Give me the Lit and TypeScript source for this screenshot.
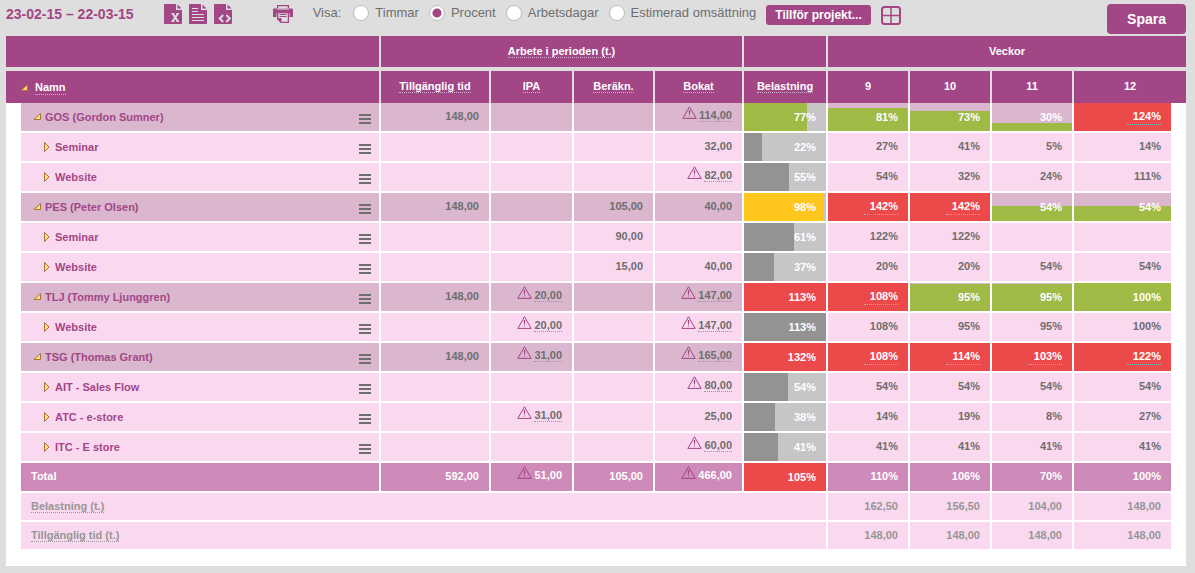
import { LitElement, html, css, svg, nothing } from "lit";
import { customElement, property, state } from "lit/decorators.js";
import { classMap } from "lit/directives/class-map.js";
import { styleMap } from "lit/directives/style-map.js";

type Tone = "ok" | "near" | "over" | "plain";

interface Hours {
  value: string;
  warn?: boolean;
}

interface Row {
  name: string;
  level: 0 | 1;
  available?: string;
  ipa?: Hours;
  estimated?: string;
  booked?: Hours;
  load: number;
  tone: Tone;
  weeks: (number | null)[];
}

const w = (value: string): Hours => ({ value, warn: true });
const h = (value: string): Hours => ({ value });

const ROWS: Row[] = [
  { name: "GOS (Gordon Sumner)", level: 0, available: "148,00", booked: w("114,00"), load: 77, tone: "ok", weeks: [81, 73, 30, 124] },
  { name: "Seminar", level: 1, booked: h("32,00"), load: 22, tone: "plain", weeks: [27, 41, 5, 14] },
  { name: "Website", level: 1, booked: w("82,00"), load: 55, tone: "plain", weeks: [54, 32, 24, 111] },
  { name: "PES (Peter Olsen)", level: 0, available: "148,00", estimated: "105,00", booked: h("40,00"), load: 98, tone: "near", weeks: [142, 142, 54, 54] },
  { name: "Seminar", level: 1, estimated: "90,00", load: 61, tone: "plain", weeks: [122, 122, null, null] },
  { name: "Website", level: 1, estimated: "15,00", booked: h("40,00"), load: 37, tone: "plain", weeks: [20, 20, 54, 54] },
  { name: "TLJ (Tommy Ljunggren)", level: 0, available: "148,00", ipa: w("20,00"), booked: w("147,00"), load: 113, tone: "over", weeks: [108, 95, 95, 100] },
  { name: "Website", level: 1, ipa: w("20,00"), booked: w("147,00"), load: 113, tone: "plain", weeks: [108, 95, 95, 100] },
  { name: "TSG (Thomas Grant)", level: 0, available: "148,00", ipa: w("31,00"), booked: w("165,00"), load: 132, tone: "over", weeks: [108, 114, 103, 122] },
  { name: "AIT - Sales Flow", level: 1, booked: w("80,00"), load: 54, tone: "plain", weeks: [54, 54, 54, 54] },
  { name: "ATC - e-store", level: 1, ipa: w("31,00"), booked: h("25,00"), load: 38, tone: "plain", weeks: [14, 19, 8, 27] },
  { name: "ITC - E store", level: 1, booked: w("60,00"), load: 41, tone: "plain", weeks: [41, 41, 41, 41] },
];

const WEEKS = ["9", "10", "11", "12"];

const page = svg`<path fill="currentColor" d="M1 0h11v6h6v13a1 1 0 0 1-1 1H1a1 1 0 0 1-1-1V1a1 1 0 0 1 1-1z"/><path fill="currentColor" d="M13.5 0.5l4 4h-4z"/>`;

const warningIcon = html`<svg class="warning" width="15" height="13" viewBox="0 0 15 13" role="img" aria-label="Varning">
  <path d="M7.5 0.8L14.2 12.4H0.8z" fill="none" stroke="currentColor" />
  <path d="M6.7 4h1.6l-.4 4.5h-.8zM7 9.4h1v1.2h-1z" fill="currentColor" />
</svg>`;

@customElement("plan-toolbar")
export class PlanToolbar extends LitElement {
  @state() private mode = "Procent";

  static styles = css`
    :host {
      display: flex;
      align-items: flex-start;
      padding: 4px 0 2px;
      color: #6e6e6e;
      font-size: 13px;
    }
    .period {
      margin: 0;
      color: #a24686;
      font-size: 14px;
      line-height: 20px;
      font-weight: bold;
      white-space: nowrap;
    }
    .exports {
      display: flex;
      gap: 7px;
      margin-left: 30px;
    }
    button {
      font-family: inherit;
      cursor: pointer;
    }
    .icon {
      display: block;
      padding: 0;
      border: 0;
      background: none;
      color: #a24686;
    }
    .icon svg {
      display: block;
    }
    .print {
      margin-left: 41px;
    }
    .modes {
      display: flex;
      gap: 10px;
      margin: 0 10px 0 20px;
      padding: 0;
      border: 0;
      line-height: 18px;
      white-space: nowrap;
    }
    .caption {
      padding-right: 2px;
    }
    .mode {
      display: flex;
      align-items: center;
      gap: 6px;
    }
    input {
      appearance: none;
      width: 16px;
      height: 16px;
      margin: 0;
      border: 1px solid #bdbdbd;
      border-radius: 50%;
      background: #fff;
    }
    input:checked {
      background: radial-gradient(circle, #a24686 0 4px, #fff 5px);
    }
    .solid {
      border: 0;
      background: #a24686;
      color: #fff;
      font-weight: bold;
      white-space: nowrap;
    }
    .add {
      height: 20px;
      margin-top: 1px;
      padding: 0 9px;
      border-radius: 3px;
      font-size: 12px;
    }
    .grid {
      margin: 2px 0 0 10px;
    }
    .save {
      height: 30px;
      margin-left: auto;
      padding: 0 20px;
      border-radius: 4px;
      font-size: 14px;
    }
  `;

  render() {
    return html`
      <h1 class="period">23-02-15 – 22-03-15</h1>
      <div class="exports">
        <button class="icon" aria-label="Excel">
          <svg width="18" height="20" viewBox="0 0 18 20">
            ${page}<path d="M8.5 9.5l5.5 8M14 9.5l-5.5 8" stroke="#dedede" stroke-width="2" /><path d="M7.3 9.6h3M12.4 9.6h2.8M7.3 17.4h3M12.4 17.4h2.8" stroke="#dedede" />
          </svg>
        </button>
        <button class="icon" aria-label="Text">
          <svg width="18" height="20" viewBox="0 0 18 20">
            ${page}<path d="M3 4.5h6M3 7.5h6M3 10.5h12M3 13.5h12M3 16.5h12" stroke="#dedede" />
          </svg>
        </button>
        <button class="icon" aria-label="XML">
          <svg width="18" height="20" viewBox="0 0 18 20">
            ${page}<path d="M9.200 11l-3.500 3.500 3.500 3.500M12.300 11l3.500 3.500-3.500 3.500" fill="none" stroke="#dedede" stroke-width="2" />
          </svg>
        </button>
      </div>
      <button class="icon print" aria-label="Skriv ut">
        <svg width="20" height="20" viewBox="0 0 20 20">
          <path d="M4.6 6V1.6h10.8V6" fill="none" stroke="currentColor" stroke-width="1.3" />
          <path fill="currentColor" d="M1 4.500h18a1 1 0 0 1 1 1V13h-3.500V9h-13v4H0V5.500a1 1 0 0 1 1-1z" />
          <path d="M4 5h12" stroke="#dedede" />
          <path d="M4.600 8.600h10.800v9.700H8L4.600 15z" fill="#dedede" stroke="currentColor" stroke-width="1.300" />
          <path d="M6.500 10.500h7M6.500 12.500h7" stroke="currentColor" />
          <path d="M4.500 14H8.500v4.500z" fill="currentColor" />
        </svg>
      </button>
      <div class="modes" role="radiogroup" aria-labelledby="show">
        <span id="show" class="caption">Visa:</span>
        ${["Timmar", "Procent", "Arbetsdagar", "Estimerad omsättning"].map(
          (m) => html`<label class="mode">
            <input type="radio" name="mode" .checked=${m === this.mode} @change=${() => (this.mode = m)} />${m}
          </label>`
        )}
      </div>
      <button class="solid add">Tillför projekt...</button>
      <button class="icon grid" aria-label="Rutnät">
        <svg width="20" height="19" viewBox="0 0 20 19">
          <rect x="1" y="1" width="18" height="17" rx="2.500" fill="none" stroke="currentColor" stroke-width="2" />
          <path d="M10 1v17M1 9.500h18" stroke="currentColor" stroke-width="1.500" />
        </svg>
      </button>
      <button class="solid save">Spara</button>
    `;
  }
}

@customElement("plan-table")
export class PlanTable extends LitElement {
  @property({ attribute: false }) rows: Row[] = [];

  static styles = css`
    :host {
      display: block;
      padding-bottom: 15px;
      background: #fff;
    }
    table {
      width: 100%;
      table-layout: fixed;
      border-collapse: separate;
      border-spacing: 0;
      font-size: 11px;
      line-height: 14px;
      font-weight: bold;
      color: #6e6e6e;
    }
    .c-edge { width: 15px; }
    .c-available { width: 110px; }
    .c-ipa { width: 83px; }
    .c-estimated { width: 81px; }
    .c-booked { width: 89px; }
    .c-load { width: 84px; }
    .c-week { width: 82px; }
    .c-last { width: 97px; }
    th,
    td {
      box-sizing: border-box;
      height: 30px;
      padding: 6px 10px 0 0;
      border: 0 solid #fff;
      border-width: 0 2px 2px 0;
      background-clip: padding-box;
      text-align: right;
      vertical-align: top;
      white-space: nowrap;
    }
    thead th {
      height: 32px;
      padding: 8px 0 0;
      border-color: #dedede;
      border-bottom-width: 0;
      background-color: #a24686;
      color: #fff;
      text-align: center;
    }
    thead .group th {
      height: 35px;
      border-bottom-width: 4px;
    }
    thead th:last-child,
    tbody td.end {
      border-right-width: 0;
    }
    thead th.first {
      padding: 9px 0 0 14px;
      text-align: left;
    }
    .edge {
      padding: 0;
      border: 0;
    }
    .term {
      border-bottom: 1px dotted #999;
    }
    thead .term {
      border-bottom-color: #cfb4d0;
    }
    .total .term {
      border-bottom-color: #b79ab5;
    }
    .light .cell { background-color: #fad9f0; }
    .dark .cell { background-color: #dab6cf; }
    .total .cell { background-color: #ce8ab8; }
    .total { color: #fff; }
    .foot { color: #969696; }
    .foot th,
    .foot td {
      height: 29px;
    }
    .label {
      padding-left: 10px;
      text-align: left;
    }
    .name {
      padding: 0 8px 0 12px;
      text-align: left;
    }
    .name.child {
      padding-left: 22px;
    }
    .line {
      display: flex;
      align-items: center;
      gap: 4px;
      height: 28px;
    }
    .line a {
      flex: 1;
      overflow: hidden;
      text-overflow: ellipsis;
      color: #a24686;
      text-decoration: none;
    }
    button {
      padding: 0;
      border: 0;
      background: none;
      cursor: pointer;
    }
    button svg {
      display: block;
    }
    .head {
      display: flex;
      align-items: center;
      gap: 7px;
    }
    .menu {
      margin-top: 4px;
      color: #6e6e6e;
    }
    .warned {
      padding-top: 3px;
    }
    .warning {
      margin-right: 2px;
      color: #a24686;
    }
    .bar {
      --track: #c6c6c6;
      padding-top: 7px;
      color: #fff;
      background-image: linear-gradient(to right, var(--tone) var(--fill), var(--track) var(--fill));
    }
    .week {
      --tone: #9fba45;
      padding-top: 7px;
      color: #fff;
      background-image: linear-gradient(to top, var(--tone) var(--fill), transparent var(--fill));
    }
    .ok { --tone: #9fba45; }
    .near { --tone: #ffc61e; }
    .over { --tone: #ec4a4a; }
    .plain { --tone: #939393; }
    .alert {
      padding-top: 6px;
      background-image: linear-gradient(#ec4a4a, #ec4a4a);
    }
    .alert .term {
      padding: 0 0 2px 6px;
      border-bottom-color: #7fc4c4;
    }
  `;

  private arrow(open: boolean, filled = false) {
    return html`<button aria-label=${open ? "Fäll ihop" : "Fäll ut"}>
      <svg width="8" height="12" viewBox="0 0 8 12">
        <path
          d=${open ? "M7.500 2.500v6h-6.500z" : "M1.500 1.500v9l4.500-4.500z"}
          fill=${filled ? "#ffd873" : "#ffe08a"}
          stroke="#a8742f"
        />
      </svg>
    </button>`;
  }

  private hours(v?: Hours) {
    const warned = !!v?.warn;
    return html`<td class=${classMap({ cell: true, warned })}>
      ${warned ? html`${warningIcon}<span class="term">${v!.value}</span>` : v?.value ?? nothing}
    </td>`;
  }

  private load(value: number, tone: Tone) {
    return html`<td class="cell bar ${tone}" style=${styleMap({ "--fill": `${Math.min(value, 100)}%` })}>${value}%</td>`;
  }

  private week(value: number | null, level: number, end: boolean) {
    if (value === null) return html`<td class=${classMap({ cell: true, end })}></td>`;
    if (level === 1) return html`<td class=${classMap({ cell: true, end })}>${value}%</td>`;
    if (value > 100)
      return html`<td class=${classMap({ cell: true, week: true, alert: true, end })}><span class="term">${value}%</span></td>`;
    return html`<td class=${classMap({ cell: true, week: true, end })} style=${styleMap({ "--fill": `${value}%` })}>${value}%</td>`;
  }

  private row(r: Row) {
    return html`<tr class=${r.level ? "light" : "dark"}>
      <td class="edge"></td>
      <th scope="row" class=${classMap({ cell: true, name: true, child: r.level === 1 })}>
        <div class="line">
          ${this.arrow(r.level === 0)}
          <a href="#">${r.name}</a>
          <button class="menu" aria-label="Meny">
            <svg width="12" height="10" viewBox="0 0 12 10"><path d="M0 1h12M0 5h12M0 9h12" stroke="currentColor" stroke-width="2" /></svg>
          </button>
        </div>
      </th>
      <td class="cell">${r.available}</td>
      ${this.hours(r.ipa)}
      <td class="cell">${r.estimated}</td>
      ${this.hours(r.booked)} ${this.load(r.load, r.tone)}
      ${r.weeks.map((v, i) => this.week(v, r.level, i === r.weeks.length - 1))}
      <td class="edge"></td>
    </tr>`;
  }

  private footer(label: string, values: string[]) {
    return html`<tr class="light foot">
      <td class="edge"></td>
      <th scope="row" colspan="6" class="cell label"><span class="term">${label}</span></th>
      ${values.map((v, i) => html`<td class=${classMap({ cell: true, end: i === values.length - 1 })}>${v}</td>`)}
      <td class="edge"></td>
    </tr>`;
  }

  render() {
    return html`<table>
      <colgroup>
        <col class="c-edge" /><col /><col class="c-available" /><col class="c-ipa" /><col class="c-estimated" />
        <col class="c-booked" /><col class="c-load" /><col class="c-week" /><col class="c-week" /><col class="c-week" />
        <col class="c-last" /><col class="c-edge" />
      </colgroup>
      <thead>
        <tr class="group">
          <th colspan="2"></th>
          <th colspan="4" scope="colgroup"><span class="term">Arbete i perioden (t.)</span></th>
          <th></th>
          <th colspan="5" scope="colgroup">Veckor</th>
        </tr>
        <tr>
          <th colspan="2" scope="col" class="first">
            <div class="head">${this.arrow(true, true)}<span class="term">Namn</span></div>
          </th>
          ${["Tillgänglig tid", "IPA", "Beräkn.", "Bokat", "Belastning"].map(
            (t) => html`<th scope="col"><span class="term">${t}</span></th>`
          )}
          ${WEEKS.map((t, i) => html`<th scope="col" colspan=${i === WEEKS.length - 1 ? 2 : 1}>${t}</th>`)}
        </tr>
      </thead>
      <tbody>
        ${this.rows.map((r) => this.row(r))}
        <tr class="total">
          <td class="edge"></td>
          <th scope="row" class="cell label"><span class="term">Total</span></th>
          <td class="cell">592,00</td>
          ${this.hours(w("51,00"))}
          <td class="cell">105,00</td>
          ${this.hours(w("466,00"))} ${this.load(105, "over")}
          ${["110%", "106%", "70%", "100%"].map((v, i) => html`<td class=${classMap({ cell: true, end: i === 3 })}>${v}</td>`)}
          <td class="edge"></td>
        </tr>
        ${this.footer("Belastning (t.)", ["162,50", "156,50", "104,00", "148,00"])}
        ${this.footer("Tillgänglig tid (t.)", ["148,00", "148,00", "148,00", "148,00"])}
      </tbody>
    </table>`;
  }
}

@customElement("app-root")
export class AppRoot extends LitElement {
  static styles = css`
    :host {
      display: block;
      box-sizing: border-box;
      min-height: 100vh;
      padding: 0 9px 7px 6px;
      background: #dedede;
      font-family: "Liberation Sans", Arial, sans-serif;
    }
  `;

  render() {
    return html`<plan-toolbar></plan-toolbar><plan-table .rows=${ROWS}></plan-table>`;
  }
}
